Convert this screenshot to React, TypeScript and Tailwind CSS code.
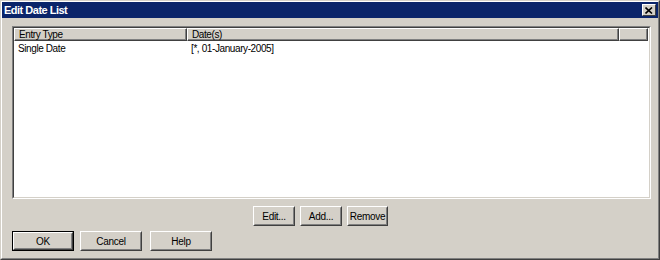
import React from "react";

const font = { fontFamily: '"Liberation Sans", Arial, sans-serif' };

function Btn({ label, w, def }: { label: string; w: number; def?: boolean }) {
  const inner = (
    <div className="h-full w-full border border-t-white border-l-white border-r-[#404040] border-b-[#404040]">
      <div className="h-full w-full border border-t-[#d4d0c8] border-l-[#d4d0c8] border-r-[#808080] border-b-[#808080] flex items-center justify-center text-[10px] tracking-[-0.3px] text-black bg-[#d4d0c8]">
        {label}
      </div>
    </div>
  );
  return def ? (
    <div className="h-[20px] border border-black" style={{ width: w }}>
      {inner}
    </div>
  ) : (
    <div className="h-[20px]" style={{ width: w }}>
      {inner}
    </div>
  );
}

function HeaderCell({ w, label, grow }: { w?: number; label: string; grow?: boolean }) {
  return (
    <div
      className={`h-full border border-t-white border-l-white border-r-[#404040] border-b-[#404040] ${grow ? "flex-1" : ""}`}
      style={w ? { width: w } : undefined}
    >
      <div className="h-full border-r border-b border-r-[#808080] border-b-[#808080] pl-[4px] text-[10px] tracking-[-0.4px] leading-[11px] text-black flex items-center">
        {label}
      </div>
    </div>
  );
}

export default function App() {
  return (
    <div className="w-[660px] h-[260px] bg-[#d4d0c8]" style={font}>
      <div className="w-full h-full border border-t-[#d4d0c8] border-l-[#d4d0c8] border-r-[#404040] border-b-[#404040]">
        <div className="w-full h-full flex flex-col border border-t-white border-l-white border-r-[#808080] border-b-[#808080]">
          <div className="h-[16px] bg-[#0a246a] flex items-center justify-between pl-[2px] pr-[2px]">
            <span className="text-white font-bold text-[11px] tracking-[-0.5px] leading-[11px]">Edit Date List</span>
            <div className="w-[14px] h-[12px] bg-[#d4d0c8] border border-t-white border-l-white border-r-[#404040] border-b-[#404040] flex items-center justify-center">
              <svg width="8" height="7" viewBox="0 0 8 7">
                <path d="M0.5 0.5 L7 6.5 M7 0.5 L0.5 6.5" stroke="black" strokeWidth="1.6" />
              </svg>
            </div>
          </div>
          <div className="flex-1 flex flex-col pl-[10px] pr-[7px] pt-[8px]">
            <div className="h-[173px] border border-t-[#808080] border-l-[#808080] border-r-white border-b-white">
              <div className="h-full border border-t-[#404040] border-l-[#404040] border-r-[#d4d0c8] border-b-[#d4d0c8] bg-white flex flex-col">
                <div className="h-[13px] flex bg-[#d4d0c8] mr-[1px]">
                  <HeaderCell w={173} label="Entry Type" />
                  <HeaderCell w={432} label="Date(s)" />
                  <HeaderCell grow label="" />
                </div>
                <div className="flex text-[10px] tracking-[-0.4px] leading-[13px] text-black mt-[1px]">
                  <div className="w-[173px] pl-[4px]">Single Date</div>
                  <div className="pl-[4px]">[*, 01-January-2005]</div>
                </div>
              </div>
            </div>
            <div className="flex gap-[5px] mt-[7px] pl-[241px]">
              <Btn label="Edit..." w={42} />
              <Btn label="Add..." w={42} />
              <Btn label="Remove" w={41} />
            </div>
            <div className="flex mt-[5px]">
              <Btn label="OK" w={62} def />
              <div className="w-[6px]" />
              <Btn label="Cancel" w={62} />
              <div className="w-[8px]" />
              <Btn label="Help" w={62} />
            </div>
          </div>
        </div>
      </div>
    </div>
  );
}
